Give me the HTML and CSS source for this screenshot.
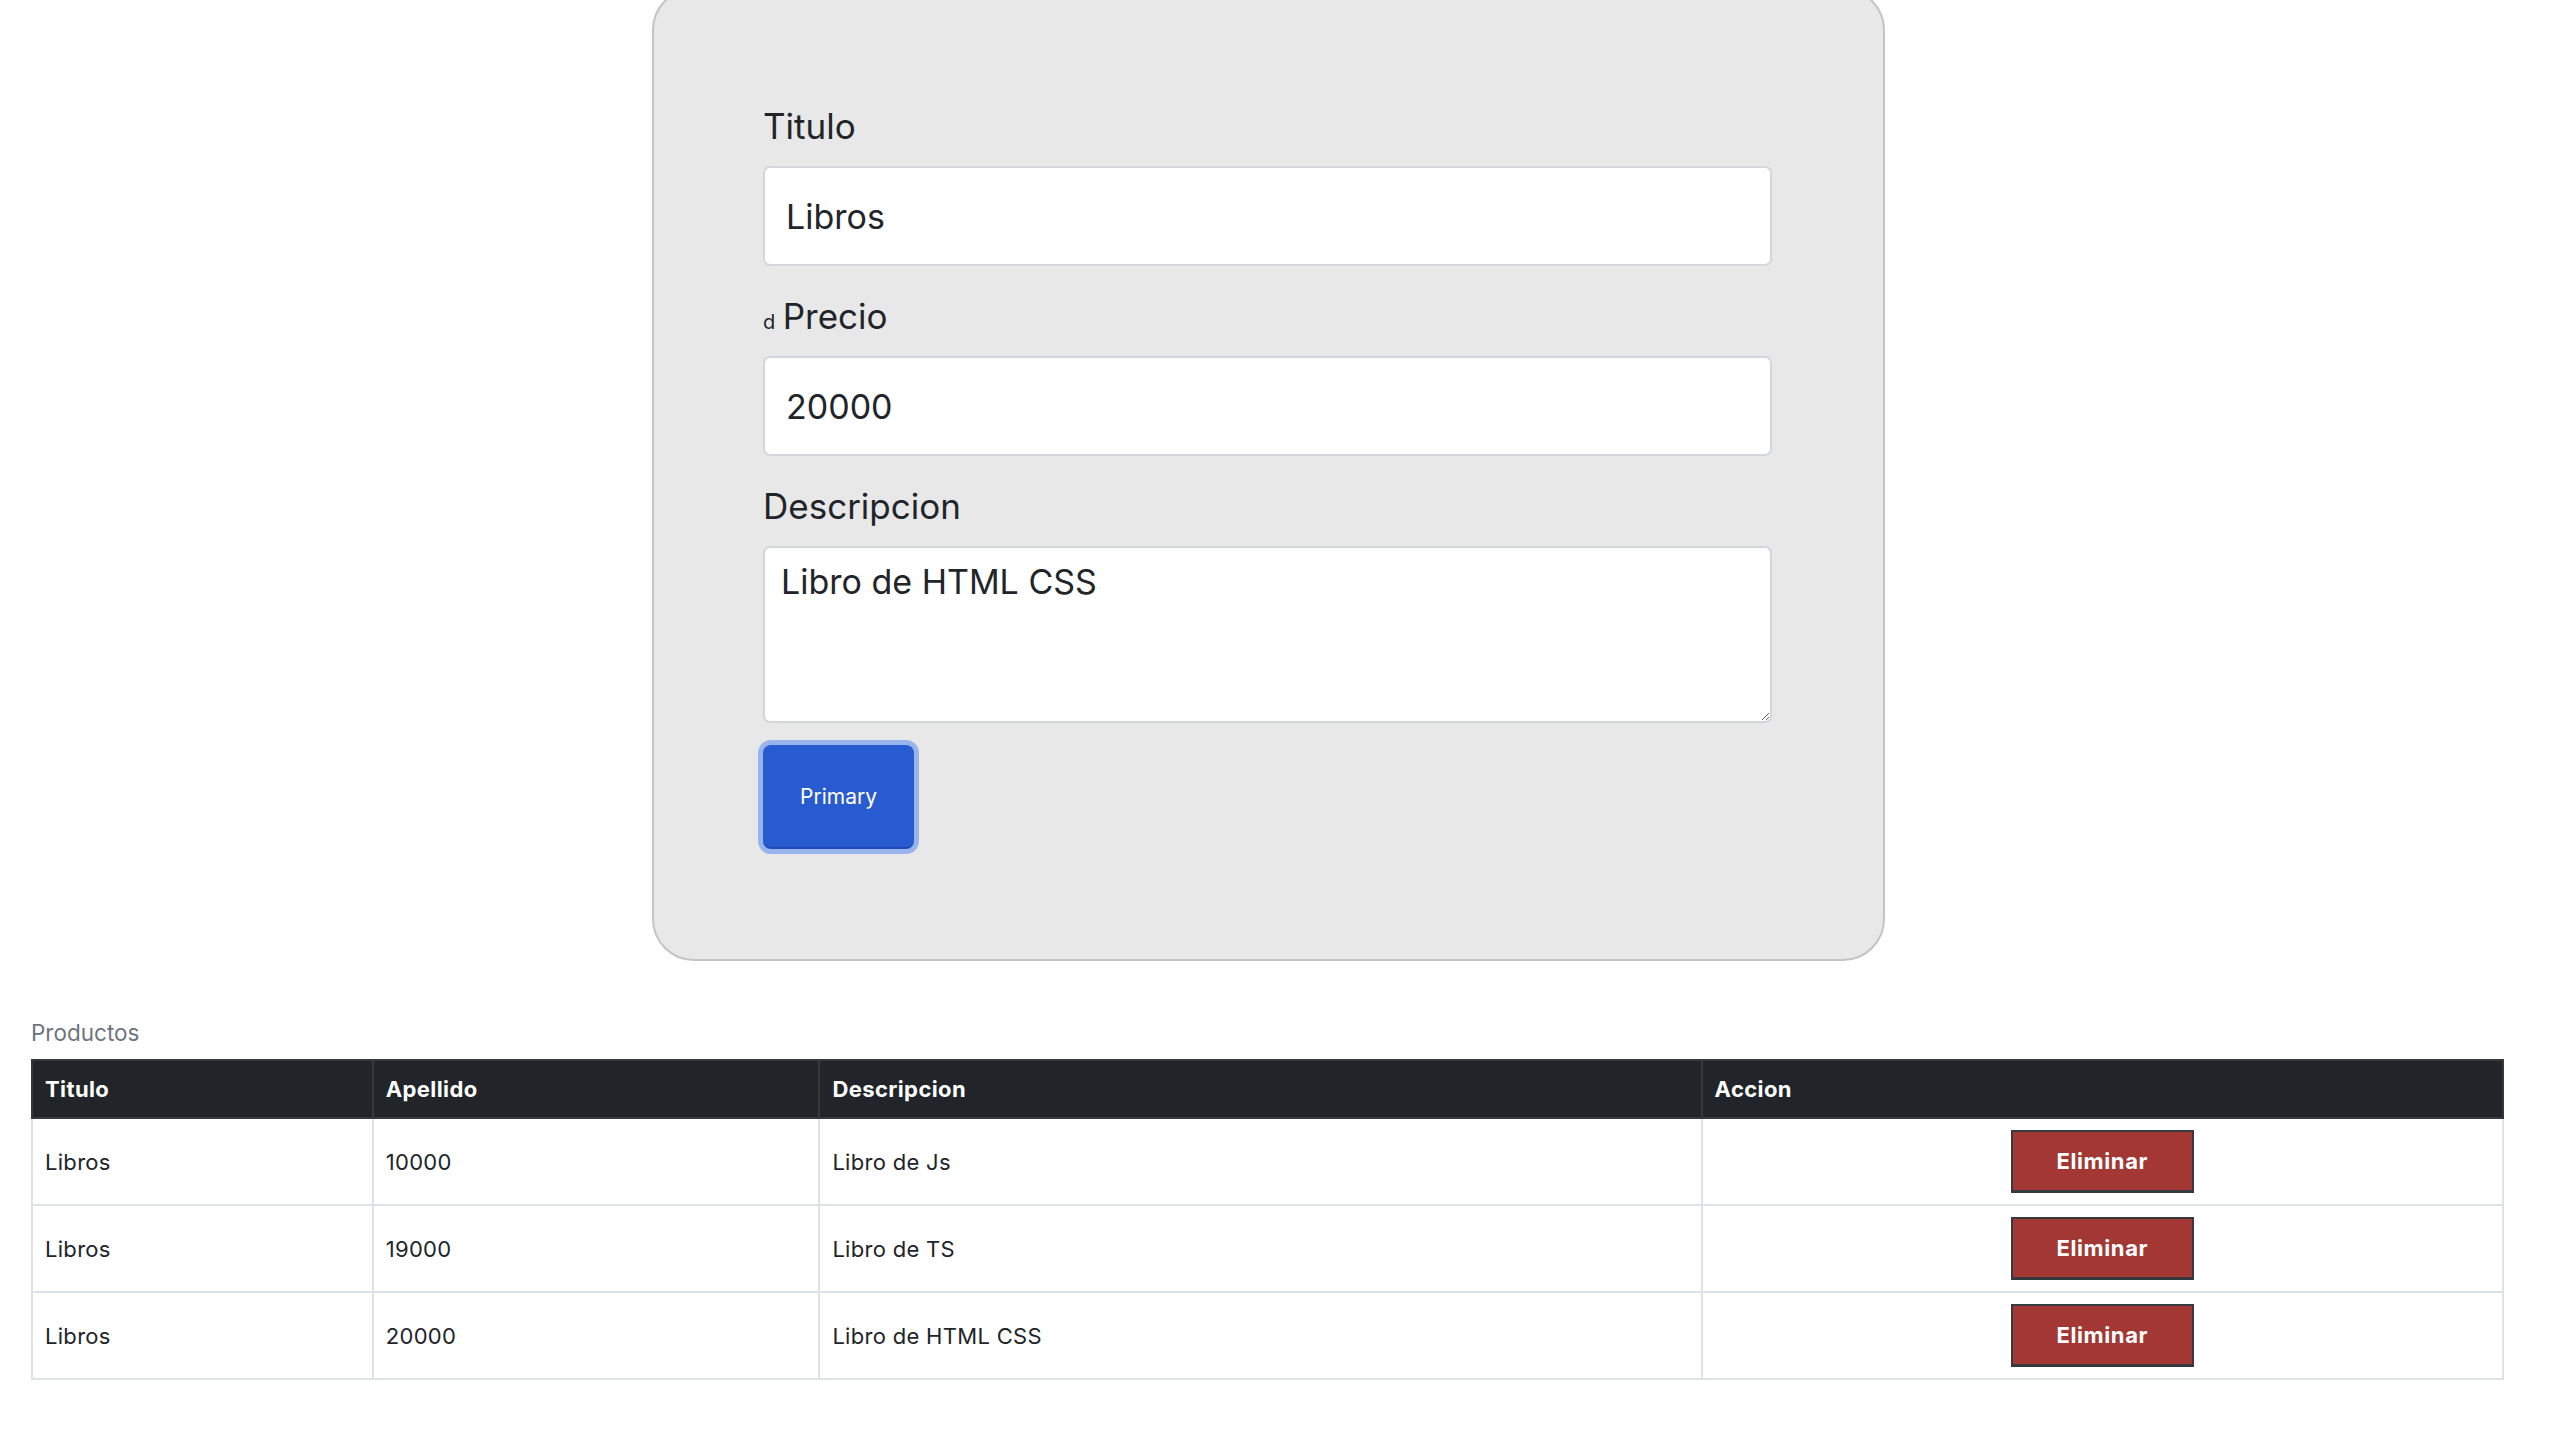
FILE: index.html
```html
<!DOCTYPE html>
<html lang="es">
<head>
<meta charset="utf-8">
<title>Productos</title>
<link rel="stylesheet" href="styles.css">
</head>
<body>
<main class="page">
  <form class="card">
    <div class="field">
      <label class="label" for="titulo">Titulo</label>
      <input class="control" id="titulo" type="text" value="Libros">
    </div>
    <div class="field">
      <div class="label-row"><span class="stray">d</span> <label class="label inline" for="precio">Precio</label></div>
      <input class="control" id="precio" type="text" value="20000">
    </div>
    <div class="field">
      <label class="label" for="desc">Descripcion</label>
      <textarea class="control area" id="desc">Libro de HTML CSS</textarea>
    </div>
    <button class="btn-primary" type="button">Primary</button>
  </form>

  <section class="list">
    <table class="table">
      <caption>Productos</caption>
      <colgroup>
        <col class="c1"><col class="c2"><col class="c3"><col class="c4">
      </colgroup>
      <thead>
        <tr><th>Titulo</th><th>Apellido</th><th>Descripcion</th><th>Accion</th></tr>
      </thead>
      <tbody>
        <tr><td>Libros</td><td>10000</td><td>Libro de Js</td><td class="action"><button class="btn-danger" type="button">Eliminar</button></td></tr>
        <tr><td>Libros</td><td>19000</td><td>Libro de TS</td><td class="action"><button class="btn-danger" type="button">Eliminar</button></td></tr>
        <tr><td>Libros</td><td>20000</td><td>Libro de HTML CSS</td><td class="action"><button class="btn-danger" type="button">Eliminar</button></td></tr>
      </tbody>
    </table>
  </section>
</main>
</body>
</html>
```

FILE: styles.css
```css
* { box-sizing: border-box; }
html, body { margin: 0; padding: 0; background: #ffffff; }
body {
  font-family: Inter, "Noto Sans", "Liberation Sans", sans-serif;
  color: #212529;
  overflow: hidden;
}

.page { display: flex; flex-direction: column; }

.card {
  margin: -12px 0 0 652px;
  width: 1233px;
  background: #e8e8e8;
  border: 2px solid #c4c4c4;
  border-radius: 42px;
  padding: 109px 111px 110px 109px;
  display: flex;
  flex-direction: column;
}

.field { display: flex; flex-direction: column; margin-bottom: 23px; }
.field:last-of-type { margin-bottom: 22px; }

.label {
  display: block;
  font-size: 35px;
  line-height: 55px;
  height: 55px;
  margin-bottom: 12px;
  color: #212529;
}
.label-row {
  height: 55px;
  line-height: 55px;
  margin-bottom: 12px;
  white-space: nowrap;
}
.label.inline { display: inline; margin: 0 0 0 3px; font-size: 35px; }
.stray { font-size: 20px; }

.control {
  display: block;
  width: 100%;
  height: 100px;
  border: 2px solid #d3d6da;
  border-radius: 7px;
  background: #ffffff;
  font-family: inherit;
  font-size: 34px;
  color: #212529;
  padding: 0 21px;
  outline: none;
}
.area {
  height: 177px;
  padding: 13px 16px 10px;
  line-height: 1.25;
  resize: vertical;
}

.btn-primary {
  align-self: flex-start;
  width: 151px;
  height: 104px;
  background: #295bd0;
  border: none;
  border-bottom: 2px solid #1f4db8;
  border-radius: 8px;
  box-shadow: 0 0 0 5px #99b4ec;
  color: #ffffff;
  font-family: inherit;
  font-size: 21px;
  cursor: pointer;
}

.list { padding: 56px 54px 0 31px; }

.table {
  border-collapse: collapse;
  width: 2473px;
  font-size: 22px;
  color: #212529;
}
.table caption {
  caption-side: top;
  text-align: left;
  color: #6c757d;
  font-size: 22.5px;
  line-height: 31px;
  padding: 0 0 11px 0;
}
.c1 { width: 341px; }
.c2 { width: 447px; }
.c3 { width: 883px; }
.c4 { width: 802px; }

.table th {
  background: #212529;
  color: #ffffff;
  font-weight: 700;
  letter-spacing: 0.4px;
  text-align: left;
  height: 58px;
  padding: 0 12px;
  border: 2px solid #34393e;
  vertical-align: middle;
}
.table td {
  height: 87px;
  padding: 0 12px;
  border: 2px solid #dee2e6;
  vertical-align: middle;
  letter-spacing: 0.3px;
}
.table td.action { text-align: center; }

.btn-danger {
  width: 183px;
  height: 63px;
  background: #a33733;
  border: 2px solid #343a40;
  border-bottom-width: 3px;
  color: #ffffff;
  font-family: inherit;
  font-weight: 700;
  font-size: 22px;
  letter-spacing: 0.6px;
  cursor: pointer;
}
```
